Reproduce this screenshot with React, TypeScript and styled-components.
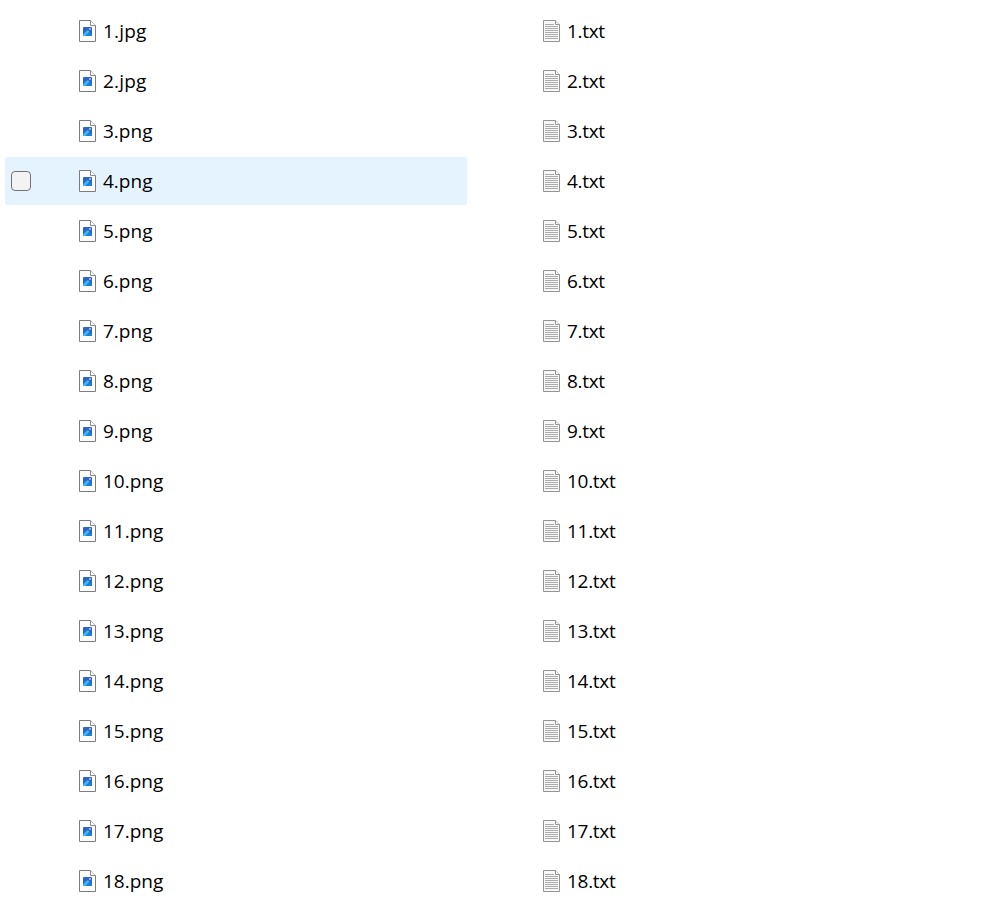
import React from "react";
import styled, { createGlobalStyle } from "styled-components";

const GlobalStyle = createGlobalStyle`
  * { box-sizing: border-box; }
  body { margin: 0; background: #fff; overflow: hidden; }
`;

const FileList = styled.main`
  display: flex;
  gap: 2px;
  height: 917px;
  padding: 7px 5px 0;
  background: #fff;
  font-family: "Open Sans", sans-serif;
`;

const Column = styled.div`
  display: flex;
  flex-direction: column;
  gap: 2px;
  width: 462px;
`;

const Row = styled.div<{ $hovered?: boolean }>`
  display: flex;
  align-items: center;
  height: 48px;
  flex: none;
  padding-left: 6px;
  border-radius: 2px;
  background: ${(p) => (p.$hovered ? "#e5f3ff" : "transparent")};
`;

const CheckSlot = styled.div`
  display: flex;
  width: 68px;
`;

const CheckBox = styled.div`
  width: 20px;
  height: 20px;
  border: 1px solid #717375;
  border-radius: 4px;
  background: #f3f3f3;
`;

const Icon = styled.svg`
  display: block;
  flex: none;
  width: 17px;
  height: 22px;
`;

const Name = styled.span<{ $tracking?: number }>`
  margin-left: 7px;
  font-size: 19px;
  line-height: 26px;
  letter-spacing: ${(p) => p.$tracking ?? 0}px;
  color: #000;
  white-space: nowrap;
`;

const ImageIcon = () => (
  <Icon viewBox="0 0 17 22">
    <path d="M.5.5h11l5 5v16H.5z" fill="#fcfcfc" stroke="#7c7c7c" />
    <path d="M11.5.5v5h5" fill="#fff" stroke="#8a8a8a" />
    <rect x="4" y="7" width="9" height="9" rx="1" fill="#2b66c6" />
    <path d="M4.3 15.6L8.2 11q.6-.6 1.2 0L13 14.6V15q0 1-1 1H5q-.5 0-.7-.4z" fill="#1f7fdc" />
    <path d="M4 14.6l4-4.1q.8-.7 1.5 0l1 1L6.2 16H5q-1 0-1-1z" fill="#35bdf8" />
    <circle cx="11" cy="9" r=".9" fill="#e3c9f2" />
  </Icon>
);

const TextIcon = () => (
  <Icon viewBox="0 0 17 22">
    <path d="M.5.5h12l4 4v17H.5z" fill="#f8f8f8" stroke="#949494" />
    <path d="M12.5.5v4h4" fill="#fff" stroke="#949494" />
    <path
      d="M2 4.5h9M2 6.5h13M2 8.5h13M2 10.5h13M2 12.5h13M2 14.5h13M2 16.5h13M2 18.5h13"
      fill="none"
      stroke="#aaa"
    />
  </Icon>
);

const numbers = Array.from({ length: 18 }, (_, i) => i + 1);

export default function App() {
  return (
    <>
      <GlobalStyle />
      <FileList>
        <Column>
          {numbers.map((n) => (
            <Row key={n} $hovered={n === 4}>
              <CheckSlot>{n === 4 && <CheckBox />}</CheckSlot>
              <ImageIcon />
              <Name $tracking={n < 3 ? 0.2 : 0}>{`${n}.${n < 3 ? "jpg" : "png"}`}</Name>
            </Row>
          ))}
        </Column>
        <Column>
          {numbers.map((n) => (
            <Row key={n}>
              <CheckSlot />
              <TextIcon />
              <Name $tracking={-0.3}>{`${n}.txt`}</Name>
            </Row>
          ))}
        </Column>
      </FileList>
    </>
  );
}
